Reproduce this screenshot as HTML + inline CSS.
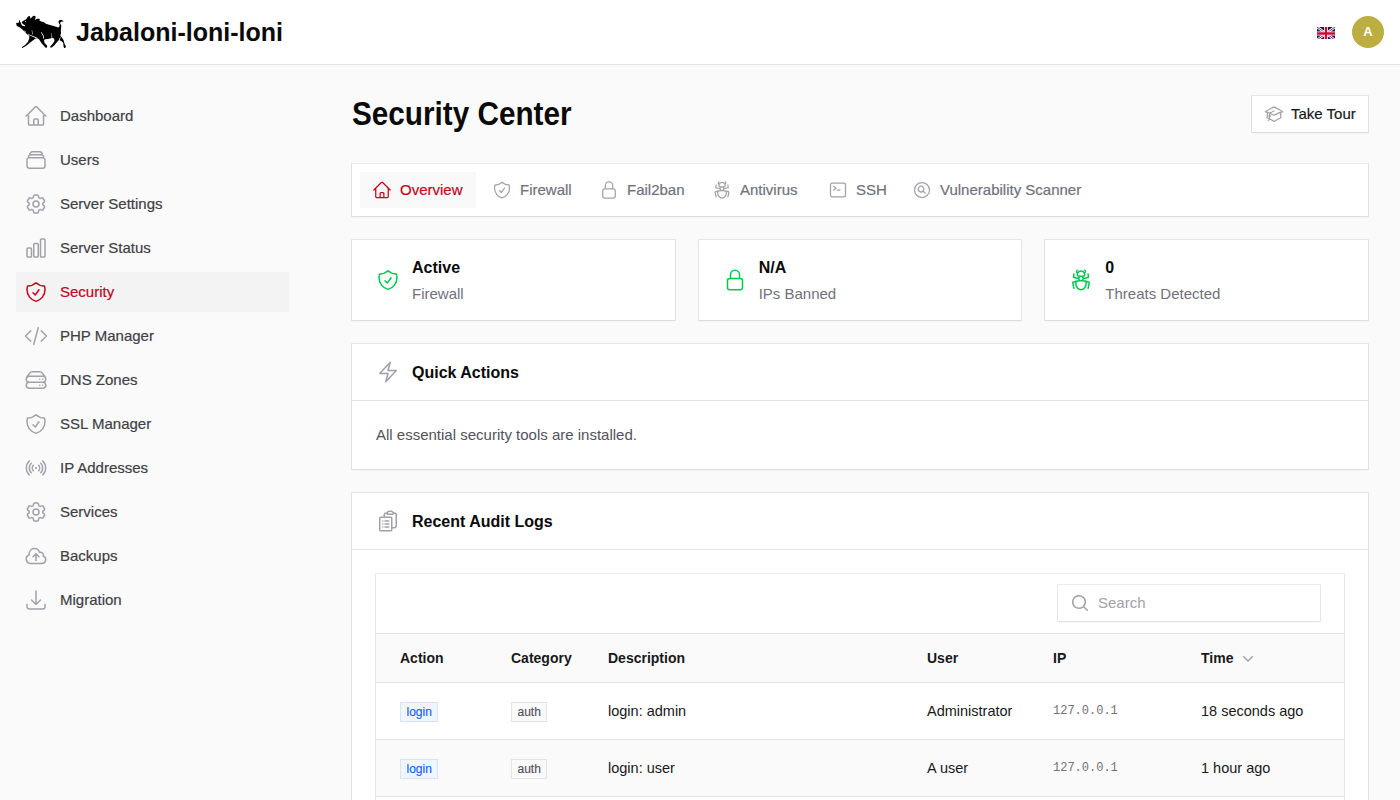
<!DOCTYPE html>
<html>
<head>
<meta charset="utf-8">
<style>
*{box-sizing:border-box;margin:0;padding:0}
html,body{width:1400px;height:800px;overflow:hidden;background:#fafafa;font-family:"Liberation Sans",sans-serif;color:#18181b}
.abs{position:absolute}
svg.i{position:absolute;fill:none;stroke:currentColor;stroke-width:1.5;stroke-linecap:round;stroke-linejoin:round}
#hdr{position:absolute;left:0;top:0;width:1400px;height:65px;background:#fff;border-bottom:1px solid #e4e4e7}
.brand{position:absolute;left:76px;top:16px;font-size:25px;font-weight:700;line-height:32px;color:#0a0a0a}
.nav{position:absolute;left:16px;width:273px;height:40px}
.nav .t{position:absolute;left:44px;top:0;line-height:40px;font-size:15px;color:#3f3f46;white-space:nowrap;-webkit-text-stroke:.2px currentColor}
.nav svg.i{left:8px;top:8px;width:24px;height:24px;color:#a1a1aa}
.nav.act{background:#f3f3f4}
.nav.act .t,.nav.act svg.i{color:#c5041c}
.ring{position:absolute;background:#fff;box-shadow:0 0 0 1px rgba(9,9,11,.08),0 1px 2px 0 rgba(0,0,0,.07)}
.tab{position:absolute;top:8px;height:36px}
.tab svg.i{left:12px;top:8px;width:20px;height:20px;color:#a1a1aa}
.tab span{position:absolute;left:40px;top:0;line-height:36px;font-size:15px;color:#71717a;white-space:nowrap;-webkit-text-stroke:.2px currentColor}
.tab.act{background:#f9f9fa}
.tab.act svg.i,.tab.act span{color:#c5041c}
.sv{position:absolute;left:60px;top:16px;line-height:24px;font-size:16px;font-weight:700;color:#0a0a0a;white-space:nowrap}
.sl{position:absolute;left:60px;top:44px;line-height:20px;font-size:15px;color:#71717a;white-space:nowrap}
.sec-h{position:absolute;left:0;top:0;width:100%;height:57px;border-bottom:1px solid #e4e4e7}
.sec-h svg.i{left:24px;top:16px;width:24px;height:24px;color:#a1a1aa}
.st{position:absolute;left:60px;top:17px;line-height:24px;font-size:16px;font-weight:700;color:#0a0a0a;white-space:nowrap}
.thead{position:absolute;left:0;width:968px;background:#fafafa;border-top:1px solid #e4e4e7;border-bottom:1px solid #e4e4e7}
.th{position:absolute;top:14px;line-height:20px;font-size:14px;font-weight:700;color:#18181b;white-space:nowrap}
.row{position:absolute;left:0;width:968px;height:57px;border-bottom:1px solid #e4e4e7}
.td{position:absolute;top:18px;line-height:20px;font-size:14.5px;color:#18181b;white-space:nowrap}
.td.mono{font-family:"Liberation Mono",monospace;font-size:12px;color:#71717a;top:18px}
.badge{position:absolute;top:19px;height:20px;line-height:18px;padding:0 5.5px;font-size:12px;border:1px solid;white-space:nowrap}
.badge.b{background:#eff6ff;border-color:#d6e4fb;color:#155dfc;-webkit-text-stroke:.15px currentColor}
.badge.g{background:#fafafa;border-color:#e4e4e7;color:#52525b;-webkit-text-stroke:.15px currentColor}
</style>
</head>
<body>
<div id="hdr">
  <svg class="abs" style="left:12px;top:12px" width="60" height="40" viewBox="0 0 1200 800">
    <path fill="#000" d="M82 222 L135 214 L141 188 L148 156 L158 163 L162 205 L185 203 L230 174 L290 140 L305 108 L330 84 L356 78 L364 108 L362 132 L385 118 L402 94 L440 74 L466 80 L472 110 L455 158 L472 148 L510 133 L546 134 L558 150 L545 168 L600 193 L642 205 L665 225 L692 240 L760 262 L850 285 L925 308 L948 292 L955 252 L935 218 L928 190 L945 163 L982 156 L1038 184 L988 195 L962 210 L966 236 L986 272 L982 322 L976 380 L980 420 L966 482 L990 500 L1030 560 L1052 640 L1077 680 L1072 716 L1045 722 L1030 692 L1025 622 L1000 592 L962 572 L942 556 L902 600 L852 660 L802 705 L770 717 L764 692 L810 640 L850 580 L842 532 L800 522 L720 540 L662 546 L642 560 L650 620 L700 672 L703 708 L672 716 L640 680 L588 620 L540 545 L512 532 L470 530 L430 560 L350 622 L280 682 L205 722 L194 705 L260 660 L318 600 L345 525 L345 482 L318 455 L268 418 L238 380 L198 340 L150 306 L95 282 Z"/>
    <path fill="#fff" d="M172 204 C180 254 210 290 262 284 L257 258 C228 260 206 238 194 202 Z"/>
    <path fill="#fff" d="M318 438 L470 500 L515 522 L508 536 L462 516 L322 456 Z"/>
    <path fill="#fff" d="M238 366 L262 384 L286 440 L274 446 Z"/>
    <path fill="#fff" d="M403 362 L414 452 L402 446 L396 372 Z"/>
    <path fill="#fff" d="M586 398 L628 462 L644 532 L630 534 L612 466 L578 410 Z"/>
    <path fill="#fff" d="M788 420 L806 520 L794 522 L782 432 Z"/>
    <path fill="#fff" d="M936 556 L966 500 L974 512 L948 566 Z"/>
    <circle cx="270" cy="186" r="11" fill="#fff"/>
  </svg>
  <div class="brand">Jabaloni-loni-loni</div>
  <div class="abs" style="left:1317px;top:26px;width:18px;height:13px;overflow:hidden">
    <svg width="18" height="13" viewBox="0 0 60 40" preserveAspectRatio="none">
      <rect width="60" height="40" fill="#012169"/>
      <path d="M0,0 L60,40 M60,0 L0,40" stroke="#fff" stroke-width="8"/>
      <path d="M0,0 L60,40 M60,0 L0,40" stroke="#C8102E" stroke-width="3"/>
      <path d="M30,0 V40 M0,20 H60" stroke="#fff" stroke-width="12"/>
      <path d="M30,0 V40 M0,20 H60" stroke="#C8102E" stroke-width="7"/>
    </svg>
  </div>
  <div class="abs" style="left:1352px;top:16px;width:32px;height:32px;border-radius:50%;background:#bdae42;color:#fff;font-size:13px;font-weight:700;text-align:center;line-height:32px">A</div>
</div>
<div class="nav" style="top:96px"><svg class="i" style="" viewBox="0 0 24 24"><path d="M2.25 12l8.954-8.955c.44-.439 1.152-.439 1.591 0L21.75 12M4.5 9.75v10.125c0 .621.504 1.125 1.125 1.125H9.75v-4.875c0-.621.504-1.125 1.125-1.125h2.25c.621 0 1.125.504 1.125 1.125V21h4.125c.621 0 1.125-.504 1.125-1.125V9.75M8.25 21h8.25"/></svg><div class="t">Dashboard</div></div>
<div class="nav" style="top:140px"><svg class="i" style="" viewBox="0 0 24 24"><path d="M6 6.878V6a2.25 2.25 0 012.25-2.25h7.5A2.25 2.25 0 0118 6v.878m-12 0c.235-.083.487-.128.75-.128h10.5c.263 0 .515.045.75.128m-12 0A2.25 2.25 0 004.5 9v.878m13.5-3A2.25 2.25 0 0119.5 9v.878m0 0a2.246 2.246 0 00-.75-.128H5.25c-.263 0-.515.045-.75.128m15 0A2.25 2.25 0 0121 12v6a2.25 2.25 0 01-2.25 2.25H5.25A2.25 2.25 0 013 18v-6c0-.98.626-1.813 1.5-2.122"/></svg><div class="t">Users</div></div>
<div class="nav" style="top:184px"><svg class="i" style="" viewBox="0 0 24 24"><path d="M9.594 3.94c.09-.542.56-.94 1.11-.94h2.593c.55 0 1.02.398 1.11.94l.213 1.281c.063.374.313.686.645.87.074.04.147.083.22.127.325.196.72.257 1.075.124l1.217-.456a1.125 1.125 0 011.37.49l1.296 2.247a1.125 1.125 0 01-.26 1.431l-1.003.827c-.293.241-.438.613-.43.992a7.723 7.723 0 010 .255c-.008.378.137.75.43.991l1.004.827c.424.35.534.955.26 1.43l-1.298 2.247a1.125 1.125 0 01-1.369.491l-1.217-.456c-.355-.133-.75-.072-1.076.124a6.47 6.47 0 01-.22.128c-.331.183-.581.495-.644.869l-.213 1.281c-.09.543-.56.94-1.11.94h-2.594c-.55 0-1.019-.398-1.11-.94l-.213-1.281c-.062-.374-.312-.686-.644-.87a6.52 6.52 0 01-.22-.127c-.325-.196-.72-.257-1.076-.124l-1.217.456a1.125 1.125 0 01-1.369-.49l-1.297-2.247a1.125 1.125 0 01.26-1.431l1.004-.827c.292-.24.437-.613.43-.991a6.932 6.932 0 010-.255c.007-.38-.138-.751-.43-.992l-1.004-.827a1.125 1.125 0 01-.26-1.43l1.297-2.247a1.125 1.125 0 011.37-.491l1.216.456c.356.133.751.072 1.076-.124.072-.044.146-.086.22-.128.332-.183.582-.495.644-.869l.214-1.28zM15 12a3 3 0 11-6 0 3 3 0 016 0z"/></svg><div class="t">Server Settings</div></div>
<div class="nav" style="top:228px"><svg class="i" style="" viewBox="0 0 24 24"><path d="M3 13.125C3 12.504 3.504 12 4.125 12h2.25c.621 0 1.125.504 1.125 1.125v6.75C7.5 20.496 6.996 21 6.375 21h-2.25A1.125 1.125 0 013 19.875v-6.75zM9.75 8.625c0-.621.504-1.125 1.125-1.125h2.25c.621 0 1.125.504 1.125 1.125v11.25c0 .621-.504 1.125-1.125 1.125h-2.25a1.125 1.125 0 01-1.125-1.125V8.625zM16.5 4.125c0-.621.504-1.125 1.125-1.125h2.25C20.496 3 21 3.504 21 4.125v15.75c0 .621-.504 1.125-1.125 1.125h-2.25a1.125 1.125 0 01-1.125-1.125V4.125z"/></svg><div class="t">Server Status</div></div>
<div class="nav act" style="top:272px"><svg class="i" style="" viewBox="0 0 24 24"><path d="M9 12.75L11.25 15 15 9.75m-3-7.036A11.959 11.959 0 013.598 6 11.99 11.99 0 003 9.749c0 5.592 3.824 10.29 9 11.623 5.176-1.332 9-6.03 9-11.622 0-1.31-.21-2.571-.598-3.751h-.152c-3.196 0-6.1-1.248-8.25-3.285z"/></svg><div class="t">Security</div></div>
<div class="nav" style="top:316px"><svg class="i" style="" viewBox="0 0 24 24"><path d="M17.25 6.75L22.5 12l-5.25 5.25m-10.5 0L1.5 12l5.25-5.25m7.5-3l-4.5 16.5"/></svg><div class="t">PHP Manager</div></div>
<div class="nav" style="top:360px"><svg class="i" style="" viewBox="0 0 24 24"><path d="M5.25 14.25h13.5m-13.5 0a3 3 0 01-3-3m3 3a3 3 0 100 6h13.5a3 3 0 100-6m-16.5-3a3 3 0 013-3h13.5a3 3 0 013 3m-19.5 0a4.5 4.5 0 01.9-2.7L5.737 5.1a3.375 3.375 0 012.7-1.35h7.126c1.062 0 2.062.5 2.7 1.35l2.587 3.45a4.5 4.5 0 01.9 2.7m0 0a3 3 0 01-3 3m0 3h.008v.008h-.008v-.008zm0-6h.008v.008h-.008v-.008zm-3 6h.008v.008h-.008v-.008zm0-6h.008v.008h-.008v-.008z"/></svg><div class="t">DNS Zones</div></div>
<div class="nav" style="top:404px"><svg class="i" style="" viewBox="0 0 24 24"><path d="M9 12.75L11.25 15 15 9.75m-3-7.036A11.959 11.959 0 013.598 6 11.99 11.99 0 003 9.749c0 5.592 3.824 10.29 9 11.623 5.176-1.332 9-6.03 9-11.622 0-1.31-.21-2.571-.598-3.751h-.152c-3.196 0-6.1-1.248-8.25-3.285z"/></svg><div class="t">SSL Manager</div></div>
<div class="nav" style="top:448px"><svg class="i" style="" viewBox="0 0 24 24"><path d="M9.348 14.651a3.75 3.75 0 010-5.303m5.304 0a3.75 3.75 0 010 5.303m-7.425 2.122a6.75 6.75 0 010-9.546m9.546 0a6.75 6.75 0 010 9.546M5.106 18.894c-3.808-3.808-3.808-9.98 0-13.789m13.788 0c3.808 3.808 3.808 9.981 0 13.79M12 12h.008v.007H12V12zm.375 0a.375.375 0 11-.75 0 .375.375 0 01.75 0z"/></svg><div class="t">IP Addresses</div></div>
<div class="nav" style="top:492px"><svg class="i" style="" viewBox="0 0 24 24"><path d="M9.594 3.94c.09-.542.56-.94 1.11-.94h2.593c.55 0 1.02.398 1.11.94l.213 1.281c.063.374.313.686.645.87.074.04.147.083.22.127.325.196.72.257 1.075.124l1.217-.456a1.125 1.125 0 011.37.49l1.296 2.247a1.125 1.125 0 01-.26 1.431l-1.003.827c-.293.241-.438.613-.43.992a7.723 7.723 0 010 .255c-.008.378.137.75.43.991l1.004.827c.424.35.534.955.26 1.43l-1.298 2.247a1.125 1.125 0 01-1.369.491l-1.217-.456c-.355-.133-.75-.072-1.076.124a6.47 6.47 0 01-.22.128c-.331.183-.581.495-.644.869l-.213 1.281c-.09.543-.56.94-1.11.94h-2.594c-.55 0-1.019-.398-1.11-.94l-.213-1.281c-.062-.374-.312-.686-.644-.87a6.52 6.52 0 01-.22-.127c-.325-.196-.72-.257-1.076-.124l-1.217.456a1.125 1.125 0 01-1.369-.49l-1.297-2.247a1.125 1.125 0 01.26-1.431l1.004-.827c.292-.24.437-.613.43-.991a6.932 6.932 0 010-.255c.007-.38-.138-.751-.43-.992l-1.004-.827a1.125 1.125 0 01-.26-1.43l1.297-2.247a1.125 1.125 0 011.37-.491l1.216.456c.356.133.751.072 1.076-.124.072-.044.146-.086.22-.128.332-.183.582-.495.644-.869l.214-1.28zM15 12a3 3 0 11-6 0 3 3 0 016 0z"/></svg><div class="t">Services</div></div>
<div class="nav" style="top:536px"><svg class="i" style="" viewBox="0 0 24 24"><path d="M12 16.5V9.75m0 0l3 3m-3-3l-3 3M6.75 19.5a4.5 4.5 0 01-1.41-8.775 5.25 5.25 0 0110.233-2.33 3 3 0 013.758 3.848A3.752 3.752 0 0118 19.5H6.75z"/></svg><div class="t">Backups</div></div>
<div class="nav" style="top:580px"><svg class="i" style="" viewBox="0 0 24 24"><path d="M3 16.5v2.25A2.25 2.25 0 005.25 21h13.5A2.25 2.25 0 0021 18.75V16.5M16.5 12L12 16.5m0 0L7.5 12m4.5 4.5V3"/></svg><div class="t">Migration</div></div>

<div class="abs" style="left:352px;top:97px;font-size:30px;font-weight:700;line-height:36px;color:#0a0a0a;white-space:nowrap;transform:scale(.99,1.09);transform-origin:0 28.4px">Security Center</div>
<div class="ring" style="left:1252px;top:96px;width:116px;height:36px">
  <svg class="i" style="left:12px;top:8px;width:20px;height:20px;color:#a1a1aa" viewBox="0 0 24 24"><path d="M4.26 10.147a60.436 60.436 0 00-.491 6.347A48.627 48.627 0 0112 20.904a48.627 48.627 0 018.232-4.41 60.46 60.46 0 00-.491-6.347m-15.482 0a50.57 50.57 0 00-2.658-.813A59.905 59.905 0 0112 3.493a59.902 59.902 0 0110.399 5.84c-.896.248-1.783.52-2.658.814m-15.482 0A50.697 50.697 0 0112 13.489a50.702 50.702 0 017.74-3.342M6.75 15a.75.75 0 100-1.5.75.75 0 000 1.5zm0 0v-3.675A55.378 55.378 0 0112 8.443m-7.007 11.55A5.981 5.981 0 006.75 15.75v-1.5"/></svg>
  <div class="abs" style="left:39px;top:0;line-height:36px;font-size:15px;color:#18181b;white-space:nowrap;-webkit-text-stroke:.2px currentColor">Take Tour</div>
</div>
<div class="ring" style="left:352px;top:164px;width:1016px;height:52px">
<div class="tab act" style="left:8px;width:116px"><svg class="i" style="" viewBox="0 0 24 24"><path d="M2.25 12l8.954-8.955c.44-.439 1.152-.439 1.591 0L21.75 12M4.5 9.75v10.125c0 .621.504 1.125 1.125 1.125H9.75v-4.875c0-.621.504-1.125 1.125-1.125h2.25c.621 0 1.125.504 1.125 1.125V21h4.125c.621 0 1.125-.504 1.125-1.125V9.75M8.25 21h8.25"/></svg><span>Overview</span></div>
<div class="tab" style="left:128px;width:103px"><svg class="i" style="" viewBox="0 0 24 24"><path d="M9 12.75L11.25 15 15 9.75m-3-7.036A11.959 11.959 0 013.598 6 11.99 11.99 0 003 9.749c0 5.592 3.824 10.29 9 11.623 5.176-1.332 9-6.03 9-11.622 0-1.31-.21-2.571-.598-3.751h-.152c-3.196 0-6.1-1.248-8.25-3.285z"/></svg><span>Firewall</span></div>
<div class="tab" style="left:235px;width:109px"><svg class="i" style="" viewBox="0 0 24 24"><path d="M16.5 10.5V6.75a4.5 4.5 0 10-9 0v3.75m-.75 11.25h10.5a2.25 2.25 0 002.25-2.25v-6.75a2.25 2.25 0 00-2.25-2.25H6.75a2.25 2.25 0 00-2.25 2.25v6.75a2.25 2.25 0 002.25 2.25z"/></svg><span>Fail2ban</span></div>
<div class="tab" style="left:348px;width:112px"><svg class="i" style="" viewBox="0 0 24 24"><path d="M12 12.75c1.148 0 2.278.08 3.383.237 1.037.146 1.866.966 1.866 2.013 0 3.728-2.35 6.75-5.25 6.75S6.75 18.728 6.75 15c0-1.046.83-1.867 1.866-2.013A24.204 24.204 0 0112 12.75zm0 0c2.883 0 5.647.508 8.207 1.44a23.91 23.91 0 01-1.152 6.06M12 12.75c-2.883 0-5.647.508-8.208 1.44.125 2.104.52 4.136 1.153 6.06M12 12.75a2.25 2.25 0 002.248-2.354M12 12.75a2.25 2.25 0 01-2.248-2.354M12 8.25c.995 0 1.971-.08 2.922-.236.403-.066.74-.358.795-.762a3.778 3.778 0 00-.399-2.25M12 8.25c-.995 0-1.97-.08-2.922-.236-.402-.066-.74-.358-.795-.762a3.734 3.734 0 01.4-2.253M12 8.25a2.25 2.25 0 00-2.248 2.146M12 8.25a2.25 2.25 0 012.248 2.146M8.683 5a6.032 6.032 0 01-1.155-1.002c.07-.63.27-1.222.574-1.747m.581 2.749A3.75 3.75 0 0115.318 5m0 0c.427-.283.815-.62 1.155-.999a4.471 4.471 0 00-.575-1.752M4.921 6a24.048 24.048 0 00-.392 3.314c1.668.546 3.416.914 5.223 1.082M19.08 6c.205 1.08.337 2.187.392 3.314a23.882 23.882 0 01-5.223 1.082"/></svg><span>Antivirus</span></div>
<div class="tab" style="left:464px;width:80px"><svg class="i" style="" viewBox="0 0 24 24"><path d="M6.75 7.5l3 2.25-3 2.25m4.5 0h3m-9 8.25h13.5A2.25 2.25 0 0021 18V6a2.25 2.25 0 00-2.25-2.25H5.25A2.25 2.25 0 003 6v12a2.25 2.25 0 002.25 2.25z"/></svg><span>SSH</span></div>
<div class="tab" style="left:548px;width:181px"><svg class="i" style="" viewBox="0 0 24 24"><path d="M15.75 15.75l-2.489-2.489m0 0a3.375 3.375 0 10-4.773-4.773 3.375 3.375 0 004.774 4.774zM21 12a9 9 0 11-18 0 9 9 0 0118 0z"/></svg><span>Vulnerability Scanner</span></div>
</div>
<div class="ring" style="left:352.00px;top:240px;width:322.67px;height:80px"><svg class="i" style="left:24px;top:28px;width:24px;height:24px;color:#00c950" viewBox="0 0 24 24"><path d="M9 12.75L11.25 15 15 9.75m-3-7.036A11.959 11.959 0 013.598 6 11.99 11.99 0 003 9.749c0 5.592 3.824 10.29 9 11.623 5.176-1.332 9-6.03 9-11.622 0-1.31-.21-2.571-.598-3.751h-.152c-3.196 0-6.1-1.248-8.25-3.285z"/></svg><div class="sv">Active</div><div class="sl">Firewall</div></div>
<div class="ring" style="left:698.67px;top:240px;width:322.67px;height:80px"><svg class="i" style="left:24px;top:28px;width:24px;height:24px;color:#00c950" viewBox="0 0 24 24"><path d="M16.5 10.5V6.75a4.5 4.5 0 10-9 0v3.75m-.75 11.25h10.5a2.25 2.25 0 002.25-2.25v-6.75a2.25 2.25 0 00-2.25-2.25H6.75a2.25 2.25 0 00-2.25 2.25v6.75a2.25 2.25 0 002.25 2.25z"/></svg><div class="sv">N/A</div><div class="sl">IPs Banned</div></div>
<div class="ring" style="left:1045.33px;top:240px;width:322.67px;height:80px"><svg class="i" style="left:24px;top:28px;width:24px;height:24px;color:#00c950" viewBox="0 0 24 24"><path d="M12 12.75c1.148 0 2.278.08 3.383.237 1.037.146 1.866.966 1.866 2.013 0 3.728-2.35 6.75-5.25 6.75S6.75 18.728 6.75 15c0-1.046.83-1.867 1.866-2.013A24.204 24.204 0 0112 12.75zm0 0c2.883 0 5.647.508 8.207 1.44a23.91 23.91 0 01-1.152 6.06M12 12.75c-2.883 0-5.647.508-8.208 1.44.125 2.104.52 4.136 1.153 6.06M12 12.75a2.25 2.25 0 002.248-2.354M12 12.75a2.25 2.25 0 01-2.248-2.354M12 8.25c.995 0 1.971-.08 2.922-.236.403-.066.74-.358.795-.762a3.778 3.778 0 00-.399-2.25M12 8.25c-.995 0-1.97-.08-2.922-.236-.402-.066-.74-.358-.795-.762a3.734 3.734 0 01.4-2.253M12 8.25a2.25 2.25 0 00-2.248 2.146M12 8.25a2.25 2.25 0 012.248 2.146M8.683 5a6.032 6.032 0 01-1.155-1.002c.07-.63.27-1.222.574-1.747m.581 2.749A3.75 3.75 0 0115.318 5m0 0c.427-.283.815-.62 1.155-.999a4.471 4.471 0 00-.575-1.752M4.921 6a24.048 24.048 0 00-.392 3.314c1.668.546 3.416.914 5.223 1.082M19.08 6c.205 1.08.337 2.187.392 3.314a23.882 23.882 0 01-5.223 1.082"/></svg><div class="sv">0</div><div class="sl">Threats Detected</div></div>

<div class="ring" style="left:352px;top:344px;width:1016px;height:125px">
  <div class="sec-h"><svg class="i" style="" viewBox="0 0 24 24"><path d="M3.75 13.5l10.5-11.25L12 10.5h8.25L9.75 21.75 12 13.5H3.75z"/></svg><div class="st">Quick Actions</div></div>
  <div class="abs" style="left:24px;top:81px;line-height:20px;font-size:15px;color:#52525b;white-space:nowrap">All essential security tools are installed.</div>
</div>
<div class="ring" style="left:352px;top:493px;width:1016px;height:400px">
  <div class="sec-h"><svg class="i" style="" viewBox="0 0 24 24"><path d="M9 12h3.75M9 15h3.75M9 18h3.75m3 .75H18a2.25 2.25 0 002.25-2.25V6.108c0-1.135-.845-2.098-1.976-2.192a48.424 48.424 0 00-1.123-.08m-5.801 0c-.065.21-.1.433-.1.664 0 .414.336.75.75.75h4.5a.75.75 0 00.75-.75 2.25 2.25 0 00-.1-.664m-5.8 0A2.251 2.251 0 0113.5 2.25H15c1.012 0 1.867.668 2.15 1.586m-5.8 0c-.376.023-.75.05-1.124.08C9.095 4.01 8.25 4.973 8.25 6.108V8.25m0 0H4.875c-.621 0-1.125.504-1.125 1.125v11.25c0 .621.504 1.125 1.125 1.125h9.75c.621 0 1.125-.504 1.125-1.125V9.375c0-.621-.504-1.125-1.125-1.125H8.25zM6.75 12h.008v.008H6.75V12zm0 3h.008v.008H6.75V15zm0 3h.008v.008H6.75V18z"/></svg><div class="st">Recent Audit Logs</div></div>
  <div class="ring" style="left:24px;top:81px;width:968px;height:320px;overflow:hidden">
    <div class="ring" style="left:682px;top:11px;width:262px;height:36px">
      <svg class="abs" style="left:12px;top:8px" width="20" height="20" viewBox="0 0 20 20"><path fill="#a1a1aa" fill-rule="evenodd" d="M9 3.5a5.5 5.5 0 1 0 0 11 5.5 5.5 0 0 0 0-11ZM2 9a7 7 0 1 1 12.452 4.391l3.328 3.329a.75.75 0 1 1-1.06 1.06l-3.329-3.328A7 7 0 0 1 2 9Z"/></svg>
      <div class="abs" style="left:40px;top:0;line-height:36px;font-size:15px;color:#a1a1aa">Search</div>
    </div>
    <div class="thead" style="top:59px;height:50px"><div class="th" style="left:24px">Action</div><div class="th" style="left:135px">Category</div><div class="th" style="left:232px">Description</div><div class="th" style="left:551px">User</div><div class="th" style="left:677px">IP</div><div class="th" style="left:825px">Time</div><svg class="abs" style="left:862px;top:13.5px" width="20" height="20" viewBox="0 0 20 20"><path fill="#a1a1aa" d="M5.22 8.22a.75.75 0 0 1 1.06 0L10 11.94l3.72-3.72a.75.75 0 1 1 1.06 1.06l-4.25 4.25a.75.75 0 0 1-1.06 0L5.22 9.28a.75.75 0 0 1 0-1.06Z"/></svg></div>
<div class="row" style="top:109px;background:#fff"><div class="badge b" style="left:24px">login</div><div class="badge g" style="left:135px">auth</div><div class="td" style="left:232px">login: admin</div><div class="td" style="left:551px">Administrator</div><div class="td mono" style="left:677px">127.0.0.1</div><div class="td" style="left:825px">18 seconds ago</div></div>
<div class="row" style="top:166px;background:#fafafa"><div class="badge b" style="left:24px">login</div><div class="badge g" style="left:135px">auth</div><div class="td" style="left:232px">login: user</div><div class="td" style="left:551px">A user</div><div class="td mono" style="left:677px">127.0.0.1</div><div class="td" style="left:825px">1 hour ago</div></div>
<div class="row" style="top:223px;background:#fff"><div class="badge b" style="left:24px">login</div><div class="badge g" style="left:135px">auth</div><div class="td" style="left:232px">login: admin</div><div class="td" style="left:551px">Administrator</div><div class="td mono" style="left:677px">127.0.0.1</div><div class="td" style="left:825px">2 hours ago</div></div>
  </div>
</div>
</body>
</html>
